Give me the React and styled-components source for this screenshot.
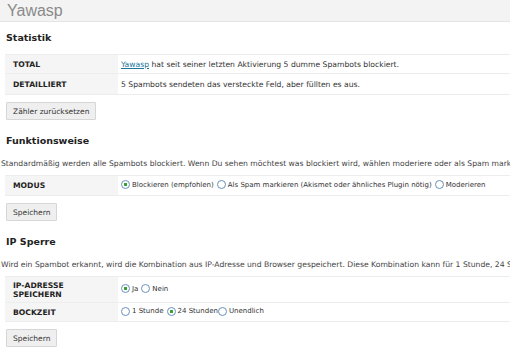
import React from "react"
import styled, { createGlobalStyle } from "styled-components"

const GlobalStyle = createGlobalStyle`
	body {
		margin: 0;
		background: #ffffff;
		font-family: "DejaVu Sans", Verdana, sans-serif;
		font-size: 7.65px;
		color: #333333;
		overflow: hidden;
	}
`
const Header = styled.div`
	height: 21px;
	background: #f3f3f3;
	border-bottom: 1px solid #e4e4e4;
	padding-left: 7px;
`
const Title = styled.h1`
	margin: 0;
	font-family: "Liberation Sans", Arial, sans-serif;
	font-weight: normal;
	font-size: 16px;
	line-height: 21px;
	color: #8a8a8a;
`
const Content = styled.div`
	padding-left: 5px;
	width: 640px;
`
const Heading = styled.h2`
	margin: ${props => (props.$first ? "10px" : "15px")} 0 0 1px;
	font-size: 9.5px;
	line-height: 12px;
	font-weight: bold;
	color: #222222;
`
const Description = styled.p`
	margin: 12px 0 0 -4px;
	line-height: 10px;
	white-space: nowrap;
	color: #444444;
`
const Table = styled.table`
	width: 100%;
	border-collapse: collapse;
	margin-top: ${props => (props.$afterText ? "6px" : "10px")};
`
const Label = styled.th`
	width: 105px;
	height: ${props => props.$h || 18}px;
	padding: 0 0 0 8px;
	text-align: left;
	font-weight: bold;
	color: #222222;
	background: #f5f5f5;
	border-top: 1px solid #ededed;
	border-bottom: 1px solid #ededed;
	line-height: 9px;
	vertical-align: middle;
`
const Value = styled.td`
	padding: 0 0 0 3px;
	border-top: 1px solid #ededed;
	border-bottom: 1px solid #ededed;
	white-space: nowrap;
	vertical-align: middle;
`
const TextLink = styled.a`
	color: #21759b;
	text-decoration: underline;
`
const Button = styled.button`
	display: block;
	margin: 7px 0 0 1px;
	height: 18px;
	padding: 0 6px;
	font-family: inherit;
	font-size: 7.5px;
	color: #333333;
	background: #efefef;
	border: 1px solid #d6d6d6;
	border-radius: 1px;
`
const Option = styled.span`
	display: inline-flex;
	align-items: center;
	font-size: 7px;
	margin-right: ${props => (props.$tight ? "0" : "3px")};
`
const Radio = styled.span`
	display: inline-block;
	box-sizing: border-box;
	width: 9px;
	height: 9px;
	margin-right: 2px;
	border-radius: 50%;
	border: 1px solid #6a8fbd;
	background: ${props =>
		props.$checked
			? "radial-gradient(circle, #2fa52f 0 1.4px, #ffffff 1.9px)"
			: "#ffffff"};
`

const Choice = ({ checked, tight, children }) => (
	<Option $tight={tight}>
		<Radio $checked={checked} />
		{children}
	</Option>
)

const App = () => {
	return (
		<>
			<GlobalStyle />
			<Header>
				<Title>Yawasp</Title>
			</Header>
			<Content>
				<Heading $first>Statistik</Heading>
				<Table>
					<tbody>
						<tr>
							<Label>TOTAL</Label>
							<Value>
								<TextLink href="#">Yawasp</TextLink> hat seit seiner letzten Aktivierung 5 dumme Spambots blockiert.
							</Value>
						</tr>
						<tr>
							<Label $h={20}>DETAILLIERT</Label>
							<Value>5 Spambots sendeten das versteckte Feld, aber füllten es aus.</Value>
						</tr>
					</tbody>
				</Table>
				<Button>Zähler zurücksetzen</Button>

				<Heading>Funktionsweise</Heading>
				<Description>
					Standardmäßig werden alle Spambots blockiert. Wenn Du sehen möchtest was blockiert wird, wählen moderiere oder als Spam markieren.
				</Description>
				<Table $afterText>
					<tbody>
						<tr>
							<Label $h={19}>MODUS</Label>
							<Value>
								<Choice checked>Blockieren (empfohlen)</Choice>
								<Choice>Als Spam markieren (Akismet oder ähnliches Plugin nötig)</Choice>
								<Choice>Moderieren</Choice>
							</Value>
						</tr>
					</tbody>
				</Table>
				<Button>Speichern</Button>

				<Heading>IP Sperre</Heading>
				<Description>
					Wird ein Spambot erkannt, wird die Kombination aus IP-Adresse und Browser gespeichert. Diese Kombination kann für 1 Stunde, 24 Stunden oder unendlich gesperrt werden.
				</Description>
				<Table $afterText>
					<tbody>
						<tr>
							<Label $h={25}>
								IP-ADRESSE
								<br />
								SPEICHERN
							</Label>
							<Value>
								<Choice checked>Ja</Choice>
								<Choice>Nein</Choice>
							</Value>
						</tr>
						<tr>
							<Label>BOCKZEIT</Label>
							<Value>
								<Choice>1 Stunde</Choice>
								<Choice checked tight>24 Stunden</Choice>
								<Choice>Unendlich</Choice>
							</Value>
						</tr>
					</tbody>
				</Table>
				<Button>Speichern</Button>
			</Content>
		</>
	)
}

export default App
